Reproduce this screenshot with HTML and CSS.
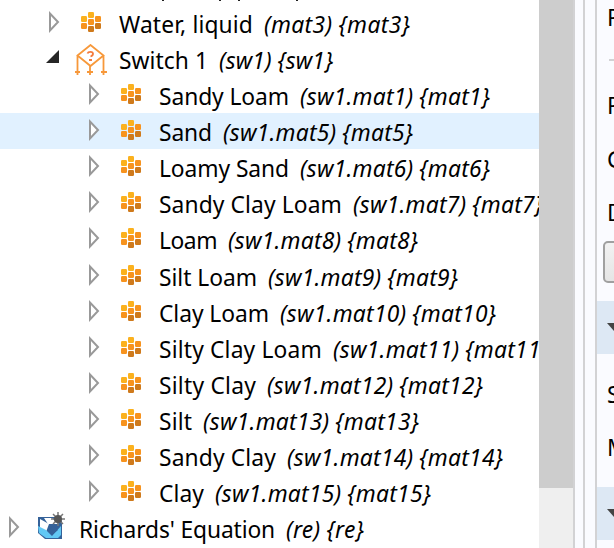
FILE: index.html
```html
<!DOCTYPE html>
<html lang="en"><head><meta charset="utf-8"><title>Model Builder</title><link rel="stylesheet" href="styles.css"></head>
<body>
<svg class="defs" aria-hidden="true">
<symbol id="closed" viewBox="0 0 12 22"><path d="M2 2.500V19.500L10 11Z" fill="#fff" stroke="#999" stroke-width="2"/></symbol>
<symbol id="open" viewBox="0 0 14 14"><path d="M13 0V13H0Z" fill="#262626"/></symbol>
<symbol id="mat" viewBox="0 0 20 20"><g fill="#fbb11e"><rect x="7" width="6" height="6" rx="1.200"/><rect y="4" width="6" height="6" rx="1.200"/></g><g fill="#f7931e"><rect x="14" y="4" width="6" height="6" rx="1.200"/><rect x="7" y="7" width="6" height="6" rx="1.200"/><rect y="11" width="6" height="6" rx="1.200"/></g><g fill="#cf7a1c"><rect x="14" y="11" width="6" height="6" rx="1.200"/><rect x="7" y="14" width="6" height="6" rx="1.200"/></g></symbol>
<symbol id="switch" viewBox="0 0 32 32"><g fill="none" stroke="#f7983a" stroke-width="1.800"><path d="M2.500 11.500L15.500 1L28.500 11.500L15.500 22ZM2.500 11V31M15 22V31M28.500 11V31M0 28H5M12 28H18M26 28H32"/></g><path d="M12.500 9.500Q13 7.800 15.500 7.800T18 9.800T15.500 12.500M14 16H17" fill="none" stroke="#f47b3c" stroke-width="1.800"/></symbol>
<symbol id="richards" viewBox="0 0 28 28"><path d="M0 5H20L24 9V27H7L0 21Z" fill="#356299"/><path d="M2 7L11 12L8 20L2 17Z" fill="#fff"/><path d="M6 6H14L20 12L10 12Z" fill="#fff"/><path d="M0 14L8 18L14 24L23 14V23L20 26H8L1 21Z" fill="#62c8f4"/><path d="M15 14L20 18L15 22L10 18Z" fill="#356299"/><path d="M20 0V14M13 7H27M15 2L25 12M25 2L15 12" stroke="#777" stroke-width="1.500"/><circle cx="20" cy="7" r="4" fill="#555"/></symbol>
</svg>
<main class="app">
<section class="tree" id="tree"><div class="cut"><i></i><i></i><i></i><i></i></div></section>
<div class="scroll"><div class="thumb"></div></div>
<div class="gutter"></div><div class="splitter"></div>
<aside class="settings">
<div class="field first">P</div><div class="rule"></div><div class="field second">P</div><div class="field third">G</div><div class="field fourth">D</div><div class="button"></div>
<div class="section"><svg viewBox="0 0 14 8"><path d="M0 0H14L7 8Z"/></svg></div>
<div class="field fifth">S</div><div class="field sixth">M</div>
<div class="section last"><svg viewBox="0 0 14 8"><path d="M0 0H14L7 8Z"/></svg></div>
</aside>
</main>
<script src="tree.js"></script>
</body></html>
```
FILE: tree.js
```
// level, icon, name, tag, name width, tag width
const rows = [
  [2, "mat", "Water, liquid", "(mat3) {mat3}", 134, 146],
  [2, "switch", "Switch 1", "(sw1) {sw1}", 89, 114],
  [3, "mat", "Sandy Loam", "(sw1.mat1) {mat1}", 130, 190],
  [3, "mat", "Sand", "(sw1.mat5) {mat5}", 53, 190],
  [3, "mat", "Loamy Sand", "(sw1.mat6) {mat6}", 130, 190],
  [3, "mat", "Sandy Clay Loam", "(sw1.mat7) {mat7}", 183, 190],
  [3, "mat", "Loam", "(sw1.mat8) {mat8}", 58, 190],
  [3, "mat", "Silt Loam", "(sw1.mat9) {mat9}", 98, 190],
  [3, "mat", "Clay Loam", "(sw1.mat10) {mat10}", 110, 216],
  [3, "mat", "Silty Clay Loam", "(sw1.mat11) {mat11}", 163, 216],
  [3, "mat", "Silty Clay", "(sw1.mat12) {mat12}", 97, 216],
  [3, "mat", "Silt", "(sw1.mat13) {mat13}", 33, 216],
  [3, "mat", "Sandy Clay", "(sw1.mat14) {mat14}", 117, 216],
  [3, "mat", "Clay", "(sw1.mat15) {mat15}", 45, 216],
  [1, "richards", "Richards' Equation", "(re) {re}", 196, 78]
];
const tree = document.getElementById("tree");
rows.forEach(([level, icon, name, tag, nameWidth, tagWidth], i) => {
  const row = document.createElement("div");
  row.className = `row level${level}${i === 3 ? " selected" : ""}${i === 6 ? " tall" : ""}`;
  const arrow = icon === "switch" ? "open" : "closed";
  row.innerHTML = `<svg class="arrow ${arrow}"><use href="#${arrow}"/></svg><svg class="icon ${icon}"><use href="#${icon}"/></svg><span class="name">${name}</span><em class="tag">${tag}</em>`;
  tree.append(row);
  [[".name", nameWidth], [".tag", tagWidth]].forEach(([selector, width]) => {
    const label = row.querySelector(selector);
    const spacing = (width - label.getBoundingClientRect().width) / label.textContent.length;
    label.style.letterSpacing = `${spacing}px`;
  });
});
```
FILE: styles.css
```css
* { box-sizing: border-box; }
body { margin: 0; overflow: hidden; background: #fff; color: #000; font: 22.800px "Noto Sans", "Open Sans", sans-serif; }
.defs { position: absolute; width: 0; height: 0; }
.app { display: flex; width: 614px; height: 548px; }
.tree { width: 539px; flex: none; overflow: hidden; }
.cut { display: flex; height: 5px; padding-left: 162px; }
.cut i { width: 2px; height: 1px; background: #222; margin-right: 17px; }
.cut i:first-child { margin-right: 55px; }
.cut i:nth-child(3) { margin-right: 56px; }
.row { display: flex; align-items: flex-start; height: 36px; white-space: nowrap; line-height: 36px; }
.tall { height: 37px; }
.level1 { padding-left: 7px; }
.level2 { padding-left: 47px; }
.level3 { padding-left: 87px; }
.selected { background: #e1f1ff; }
.arrow { flex: none; width: 12px; height: 22px; margin: 6px 20px 0 1px; }
.arrow.open { width: 14px; height: 14px; margin: 9px 20px 0 -1px; }
.icon { flex: none; width: 20px; height: 20px; margin: 7px 18px 0 1px; }
.icon.switch { width: 32px; height: 32px; margin: 3px 12px 0 -5px; }
.icon.richards { width: 28px; height: 28px; margin: 2px 13px 0 -2px; }
.name { flex: none; padding-top: 2px; }
.tag { flex: none; margin-left: 11px; padding-top: 2px; }
.scroll { flex: none; width: 36px; background: #efefef; }
.scroll { border-right: 2px solid #d2d2d4; }
.thumb { height: 488px; background: #cdcdcd; }
.gutter { flex: none; width: 10px; background: #fafbff; border-right: 2px solid #d2d2d4; }
.splitter { flex: none; width: 12px; background: #fafbff; border-right: 2px solid #d2d2d4; }
.settings { flex: none; width: 17px; overflow: hidden; background: #fafbff; }
.field { padding-left: 10px; height: 32px; line-height: 32px; }
.first { margin-top: 2px; }
.rule { height: 2px; margin: 25px 0 0 12px; background: #d2d2d4; }
.second { margin-top: 29px; }
.third { margin-top: 22px; }
.fourth { margin-top: 21px; }
.button { width: 40px; height: 42px; margin: 12px 0 0 6px; border: 2px solid #a0a0a0; border-radius: 5px; background: linear-gradient(#f2f2f2, #e5e5e5); }
.section { height: 53px; margin-top: 18px; padding: 22px 0 0 10px; background: #dde8f4; }
.section svg { display: block; width: 14px; height: 8px; fill: #444; }
.fifth { margin-top: 25px; }
.sixth { margin-top: 21px; }
.last { margin-top: 23px; }
```
